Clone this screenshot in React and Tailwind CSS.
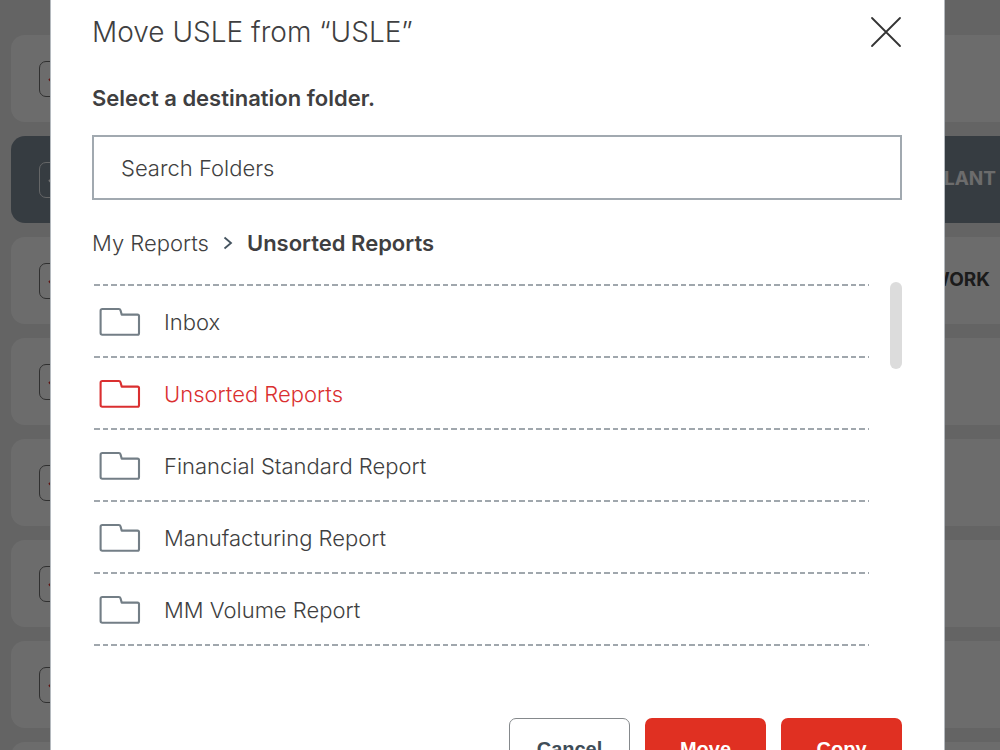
import React, { useState } from "react";

const folders = [
  "Inbox",
  "Unsorted Reports",
  "Financial Standard Report",
  "Manufacturing Report",
  "MM Volume Report",
];

const reports = [
  { id: 1, label: "" },
  { id: 2, label: "PLANT", selected: true },
  { id: 3, label: "WORK" },
  { id: 4, label: "" },
  { id: 5, label: "" },
  { id: 6, label: "" },
  { id: 7, label: "" },
  { id: 8, label: "" },
];

function FolderIcon() {
  return (
    <svg width="42" height="30" viewBox="0 0 42 30" fill="none" stroke="currentColor" strokeWidth="2.1" strokeLinejoin="round" aria-hidden="true">
      <path d="M3.3 2H19.9Q21.2 2 21.5 3.2L22.7 7.6H38.5Q40 7.6 40 9.1V26.2Q40 27.7 38.5 27.7H3.3Q1.6 27.7 1.6 26V3.7Q1.6 2 3.3 2Z" />
    </svg>
  );
}

function CloseIcon() {
  return (
    <svg width="32" height="32" viewBox="0 0 32 32" fill="none" stroke="currentColor" strokeWidth="1.8" strokeLinecap="round" aria-hidden="true">
      <path d="M2 2L30 30M30 2L2 30" />
    </svg>
  );
}

function DashedRule() {
  return (
    <div className="h-[2px] bg-[linear-gradient(90deg,#a0a7ad_0_6px,transparent_6px_9px,#a0a7ad_9px_14px,transparent_14px_17px)] bg-[length:17px_2px]" />
  );
}

function ReportRow({ label, selected }) {
  return (
    <li
      className={`flex h-[87px] shrink-0 items-center justify-between rounded-l-[14px] pl-7 ${
        selected ? "bg-[#798591] pr-1 text-[#f0f0f0]" : "bg-[#f0f0f0] pr-[10px] text-[#3c3c3c]"
      }`}
    >
      <span
        className={`flex h-9 w-9 items-center rounded-[7px] border pl-2 ${
          selected ? "border-[#e0e2e4]" : "border-[#6a6a6a]"
        }`}
      >
        <svg width="18" height="14" viewBox="0 0 18 14" fill="none" stroke={selected ? "#ffffff" : "#d8302a"} strokeWidth="2" aria-hidden="true">
          <path d="M1 7L6 12L17 1" />
        </svg>
      </span>
      <span className="text-[19px] font-bold">{label}</span>
    </li>
  );
}

export default function App() {
  const [active, setActive] = useState("Unsorted Reports");
  const [query, setQuery] = useState("");

  return (
    <div className="h-screen overflow-hidden bg-[#dedede] font-['Inter',sans-serif]">
      <ul className="flex flex-col gap-[14px] pt-[35px] pl-[11px]">
        {reports.map((r) => (
          <ReportRow key={r.id} {...r} />
        ))}
      </ul>

      <div className="fixed inset-0 overflow-hidden bg-black/55 pr-[55px] pl-[50px]">
        <section
          role="dialog"
          aria-modal="true"
          aria-labelledby="dialog-title"
          className="border-x border-[#b4b9be] bg-white pr-[42px] pb-10 pl-[41px] text-[#3f3f41]"
        >
          <header className="flex items-center justify-between pt-4">
            <h1 id="dialog-title" className="text-[28px] leading-8 font-light">
              Move USLE from “USLE”
            </h1>
            <button type="button" aria-label="Close" className="text-[#333333]">
              <CloseIcon />
            </button>
          </header>

          <label htmlFor="folder-search" className="mt-[34px] block text-[22px] leading-8 font-semibold">
            Select a destination folder.
          </label>
          <input
            id="folder-search"
            type="text"
            value={query}
            onChange={(e) => setQuery(e.target.value)}
            placeholder="Search Folders"
            className="mt-[21px] block h-[65px] w-full border-2 border-[#a1a9b0] px-[27px] text-[22px] font-light placeholder:text-[#3f3f41] placeholder:opacity-100"
          />

          <nav aria-label="Breadcrumb" className="mt-[27px] flex items-center text-[22px] leading-8">
            <a href="#my-reports" className="font-light">My Reports</a>
            <svg className="mx-[14px]" width="10" height="14" viewBox="0 0 10 14" fill="none" stroke="#44535f" strokeWidth="1.8" aria-hidden="true">
              <path d="M1.5 1.5L8 7L1.5 12.5" />
            </svg>
            <span aria-current="page" className="font-semibold">Unsorted Reports</span>
          </nav>

          <div className="mt-[23px] flex items-start justify-between">
            <div className="mt-[2px] mr-[21px] ml-[2px] grow">
              <DashedRule />
              <ul>
                {folders.map((name) => (
                  <li key={name}>
                    <button
                      type="button"
                      onClick={() => setActive(name)}
                      className={`flex h-[70px] w-full items-center gap-[23px] pt-[2px] pl-[5px] text-left text-[22px] ${
                        active === name ? "text-[#da2f30]" : ""
                      }`}
                    >
                      <span className={active === name ? "" : "text-[#737e86]"}>
                        <FolderIcon />
                      </span>
                      <span className="font-light">{name}</span>
                    </button>
                    <DashedRule />
                  </li>
                ))}
              </ul>
            </div>
            <div className="h-[87px] w-3 rounded-full bg-[#dcdcdc]" />
          </div>

          <footer className="mt-[72px] flex justify-end gap-[15px] font-['Liberation_Sans',sans-serif] text-[20px] font-bold">
            <button type="button" className="h-[62px] w-[121px] rounded-[7px] border border-[#85898c] bg-white text-[#3f4d58]">
              Cancel
            </button>
            <button type="button" className="h-[62px] w-[121px] rounded-[7px] bg-[#e03022] text-white">
              Move
            </button>
            <button type="button" className="h-[62px] w-[121px] rounded-[7px] bg-[#e03022] text-white">
              Copy
            </button>
          </footer>
        </section>
      </div>
    </div>
  );
}
